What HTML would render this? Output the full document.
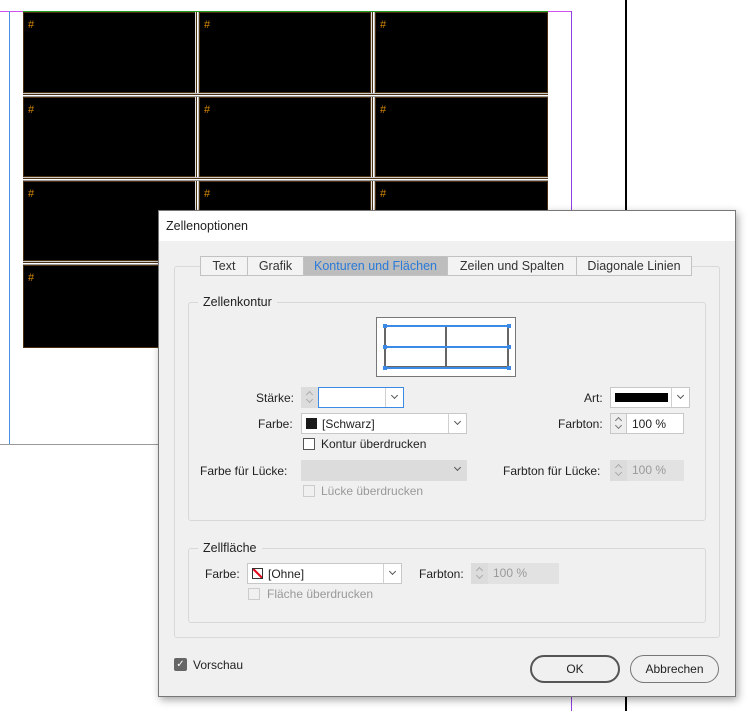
<!DOCTYPE html>
<html><head><meta charset="utf-8"><style>
*{box-sizing:border-box;margin:0;padding:0}
body{width:754px;height:711px;background:#fff;position:relative;overflow:hidden;font-family:"Liberation Sans",sans-serif;font-size:12px;color:#222}
.a{position:absolute}
.cell{position:absolute;background:#000;border:1px solid #4a3010}
.hash{position:absolute;left:4px;top:6px;color:#d88a00;font-size:11px}
.lbl{position:absolute;font-size:12px;color:#222;white-space:nowrap}
.dis{color:#999}
.box{position:absolute;background:#fff;border:1px solid #c8c8c8}
.chev{position:absolute;top:0;bottom:0;right:0;width:18px;border-left:1px solid #d0d0d0}
.chev:after{content:"";position:absolute;left:6px;top:5px;width:4px;height:4px;border-right:1px solid #555;border-bottom:1px solid #555;transform:rotate(45deg)}
.spin{position:absolute;border:1px solid #c8c8c8;background:#eee}
.spin:before{content:"";position:absolute;left:5px;top:4px;width:4px;height:4px;border-left:1px solid #777;border-top:1px solid #777;transform:rotate(45deg)}
.spin:after{content:"";position:absolute;left:5px;bottom:5px;width:4px;height:4px;border-right:1px solid #777;border-bottom:1px solid #777;transform:rotate(45deg)}
.spin.d{background:#dcdcdc;border-color:#dcdcdc}
.spin.d:before,.spin.d:after{border-color:#aaa}
.cb{position:absolute;width:12px;height:12px;border:1px solid #555;background:#fff}
.grp{position:absolute;border:1px solid #d8d8d8;border-radius:3px}
.tab{position:absolute;top:256px;height:20px;border:1px solid #c2c2c2;background:#f3f3f3;font-size:12.5px;text-align:center;line-height:18px;color:#333}
.hl{position:absolute;left:23px;width:525px;height:4px;background:linear-gradient(#999 0,#fff 1px,#fff 1px,#4a3010 1px,#4a3010 2px,#fff 2px,#fff 3px,#999 3px)}
.vl{position:absolute;top:11px;width:4px;height:337px;background:linear-gradient(90deg,#bbb 0,#fff 1px,#4a3010 1px,#4a3010 2px,#fff 2px,#fff 3px,#bbb 3px)}
</style></head><body>
<!-- page -->
<div class="a" style="left:0;top:11px;width:572px;height:1px;background:#d050f0"></div>
<div class="a" style="left:571px;top:11px;width:1px;height:700px;background:#9040e0"></div>
<div class="a" style="left:9px;top:11px;width:1px;height:434px;background:#4a90e0"></div>
<div class="a" style="left:0;top:444px;width:160px;height:1px;background:#999"></div>
<div class="a" style="left:625px;top:0;width:2px;height:711px;background:#000"></div>
<div class="a" style="left:23px;top:11px;width:525px;height:337px;background:#fff"></div>
<div class="cell" style="left:23px;top:12px;width:173px;height:81px"><span class="hash">#</span></div>
<div class="cell" style="left:199px;top:12px;width:172px;height:81px"><span class="hash">#</span></div>
<div class="cell" style="left:375px;top:12px;width:173px;height:81px"><span class="hash">#</span></div>
<div class="cell" style="left:23px;top:97px;width:173px;height:80px"><span class="hash">#</span></div>
<div class="cell" style="left:199px;top:97px;width:172px;height:80px"><span class="hash">#</span></div>
<div class="cell" style="left:375px;top:97px;width:173px;height:80px"><span class="hash">#</span></div>
<div class="cell" style="left:23px;top:181px;width:173px;height:80px"><span class="hash">#</span></div>
<div class="cell" style="left:199px;top:181px;width:172px;height:80px"><span class="hash">#</span></div>
<div class="cell" style="left:375px;top:181px;width:173px;height:80px"><span class="hash">#</span></div>
<div class="cell" style="left:23px;top:265px;width:173px;height:83px"><span class="hash">#</span></div>
<div class="cell" style="left:199px;top:265px;width:172px;height:83px"></div>
<div class="cell" style="left:375px;top:265px;width:173px;height:83px"></div>
<div class="vl" style="left:195px"></div>
<div class="vl" style="left:371px"></div>
<div class="hl" style="top:93px"></div>
<div class="hl" style="top:177px"></div>
<div class="hl" style="top:261px"></div>
<div class="a" style="left:23px;top:11px;width:525px;height:1px;background:#20a020"></div>
<!-- dialog -->
<div class="a" style="left:158px;top:210px;width:578px;height:487px;background:#f0f0f0;border:1px solid #777;box-shadow:2px 3px 8px rgba(0,0,0,.35)"></div>
<div class="a" style="left:159px;top:211px;width:576px;height:30px;background:#fff"></div>
<div class="lbl" style="left:166px;top:219px;font-size:12.5px">Zellenoptionen</div>
<div class="grp" style="left:174px;top:266px;width:546px;height:372px"></div>
<div class="tab" style="left:200px;width:48px">Text</div>
<div class="tab" style="left:247px;width:57px">Grafik</div>
<div class="tab" style="left:303px;width:145px;background:#bdbdbd;color:#2a7ad8">Konturen und Flächen</div>
<div class="tab" style="left:447px;width:130px">Zeilen und Spalten</div>
<div class="tab" style="left:576px;width:116px">Diagonale Linien</div>
<div class="grp" style="left:188px;top:302px;width:518px;height:219px"></div>
<div class="lbl" style="left:198px;top:295px;background:#f0f0f0;padding:0 5px;font-size:12.5px">Zellenkontur</div>
<div class="a" style="left:376px;top:317px;width:140px;height:60px;background:#fff;border:1px solid #777"></div>
<div class="a" style="left:384px;top:325px;width:125px;height:43px;border:2px solid #666"></div>
<div class="a" style="left:445px;top:325px;width:2px;height:43px;background:#666"></div>
<div class="a" style="left:384px;top:325px;width:126px;height:2px;background:#3a8ae6"></div>
<div class="a" style="left:384px;top:346px;width:126px;height:2px;background:#3a8ae6"></div>
<div class="a" style="left:384px;top:367px;width:126px;height:2px;background:#3a8ae6"></div>
<div class="a" style="left:383px;top:324px;width:4px;height:4px;background:#3a8ae6"></div>
<div class="a" style="left:507px;top:324px;width:4px;height:4px;background:#3a8ae6"></div>
<div class="a" style="left:383px;top:345px;width:4px;height:4px;background:#3a8ae6"></div>
<div class="a" style="left:507px;top:345px;width:4px;height:4px;background:#3a8ae6"></div>
<div class="a" style="left:383px;top:366px;width:4px;height:4px;background:#3a8ae6"></div>
<div class="a" style="left:507px;top:366px;width:4px;height:4px;background:#3a8ae6"></div>
<div class="lbl" style="left:256px;top:391px">Stärke:</div>
<div class="spin d" style="left:301px;top:387px;width:17px;height:21px"></div>
<div class="box" style="left:318px;top:387px;width:86px;height:21px;border-color:#3a8ae6"><div class="chev"></div></div>
<div class="lbl" style="left:584px;top:391px">Art:</div>
<div class="box" style="left:610px;top:387px;width:80px;height:21px"><div class="a" style="left:4px;top:5px;width:53px;height:9px;background:#000"></div><div class="chev"></div></div>
<div class="lbl" style="left:258px;top:417px">Farbe:</div>
<div class="box" style="left:301px;top:413px;width:166px;height:21px"><div class="a" style="left:4px;top:4px;width:11px;height:11px;background:#1a1a1a"></div><span class="lbl" style="left:20px;top:3px">[Schwarz]</span><div class="chev"></div></div>
<div class="lbl" style="left:558px;top:417px">Farbton:</div>
<div class="spin" style="left:610px;top:413px;width:17px;height:21px"></div>
<div class="box" style="left:626px;top:413px;width:58px;height:21px"><span class="lbl" style="left:5px;top:3px">100 %</span></div>
<div class="cb" style="left:303px;top:438px"></div>
<div class="lbl" style="left:321px;top:437px">Kontur überdrucken</div>
<div class="lbl" style="left:200px;top:464px">Farbe für Lücke:</div>
<div class="a" style="left:301px;top:460px;width:166px;height:21px;background:#dcdcdc"><div class="chev" style="border-left:none"></div></div>
<div class="lbl" style="left:503px;top:464px">Farbton für Lücke:</div>
<div class="a" style="left:610px;top:460px;width:74px;height:21px;background:#e2e2e2"><span class="lbl dis" style="left:22px;top:3px">100 %</span></div>
<div class="spin d" style="left:610px;top:460px;width:17px;height:21px"></div>
<div class="cb" style="left:303px;top:485px;border-color:#ccc;background:#f0f0f0"></div>
<div class="lbl dis" style="left:321px;top:484px">Lücke überdrucken</div>
<div class="grp" style="left:188px;top:548px;width:518px;height:75px"></div>
<div class="lbl" style="left:198px;top:541px;background:#f0f0f0;padding:0 5px;font-size:12.5px">Zellfläche</div>
<div class="lbl" style="left:205px;top:567px">Farbe:</div>
<div class="box" style="left:247px;top:563px;width:155px;height:21px"><div class="a" style="left:4px;top:4px;width:11px;height:11px;border:1px solid #333;background:linear-gradient(to top right,transparent 44%,#e01020 44%,#e01020 60%,transparent 60%)"></div><span class="lbl" style="left:20px;top:3px">[Ohne]</span><div class="chev"></div></div>
<div class="lbl" style="left:419px;top:567px">Farbton:</div>
<div class="a" style="left:471px;top:563px;width:88px;height:21px;background:#e2e2e2"><span class="lbl dis" style="left:22px;top:3px">100 %</span></div>
<div class="spin d" style="left:471px;top:563px;width:17px;height:21px"></div>
<div class="cb" style="left:248px;top:588px;border-color:#ccc;background:#f0f0f0"></div>
<div class="lbl dis" style="left:267px;top:587px">Fläche überdrucken</div>
<div class="a" style="left:174px;top:658px;width:13px;height:13px;background:#666;border-radius:2px;color:#fff;font-size:10px;line-height:13px;text-align:center">✓</div>
<div class="lbl" style="left:193px;top:658px">Vorschau</div>
<div class="a" style="left:530px;top:655px;width:90px;height:28px;border:2px solid #555;border-radius:14px;text-align:center;line-height:24px">OK</div>
<div class="a" style="left:630px;top:655px;width:89px;height:28px;border:1px solid #777;border-radius:14px;text-align:center;line-height:26px">Abbrechen</div>
</body></html>
